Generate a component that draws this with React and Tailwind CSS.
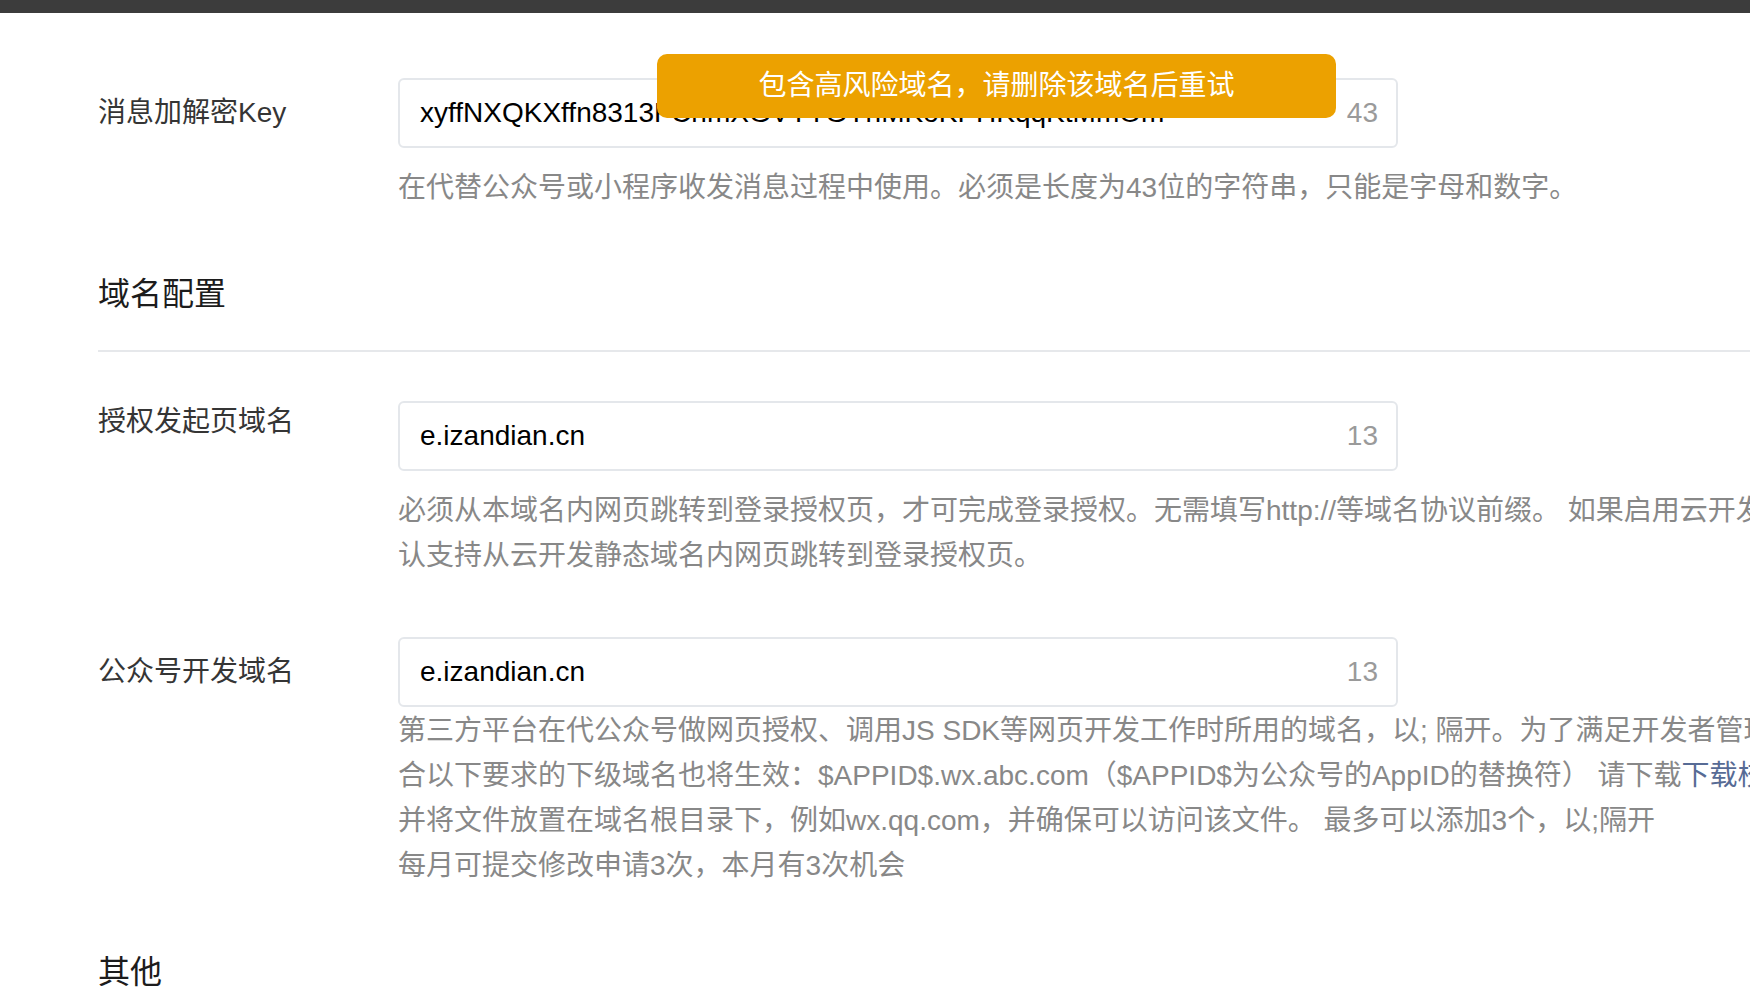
import React from 'react';

const FONT = { fontFamily: '"Liberation Sans", "Noto Sans CJK SC", sans-serif' };

const Field = ({ label, value, count, labelAlign = 'center' }) => (
  <div className="flex">
    <div
      className={
        labelAlign === 'center'
          ? 'w-[300px] h-[70px] flex items-center text-[28px] text-[#353535]'
          : 'w-[300px] leading-[42px] text-[28px] text-[#353535]'
      }
    >
      {label}
    </div>
    <div className="w-[1000px] h-[70px] border-2 border-[#e4e7eb] rounded-md flex items-center justify-between pl-[20px] pr-[18px] bg-white">
      <span className="text-[28px] text-black whitespace-nowrap">{value}</span>
      <span className="text-[28px] text-[#9a9a9a]">{count}</span>
    </div>
  </div>
);

const Help = ({ lines, className = '' }) => (
  <div className={`ml-[300px] text-[28px] leading-[45px] text-[#888888] whitespace-nowrap ${className}`}>
    {lines.map((line, i) => (
      <div key={i}>{line}</div>
    ))}
  </div>
);

export default function App() {
  return (
    <div className="relative w-[1750px] h-[992px] overflow-hidden bg-white" style={FONT}>
      {/* top bar */}
      <div className="h-[13px] bg-[#3c3c3c]" />

      <div className="pl-[98px]">
        <div className="pt-[65px]">
          <Field label="消息加解密Key" value="xyffNXQKXffn8313FChmXGVYTGYhMKoKPHKqqKtMmOm" count="43" />
        </div>
        <Help
          className="mt-[17px]"
          lines={['在代替公众号或小程序收发消息过程中使用。必须是长度为43位的字符串，只能是字母和数字。']}
        />

        {/* 域名配置 */}
        <div className="mt-[62px] text-[32px] leading-[44px] text-[#1c1c1c]">域名配置</div>
        <div className="mt-[34px] h-[2px] bg-[#e6e8eb]" />

        <div className="mt-[49px]">
          <Field label="授权发起页域名" value="e.izandian.cn" count="13" labelAlign="top" />
        </div>
        <Help
          className="mt-[17px]"
          lines={[
            '必须从本域名内网页跳转到登录授权页，才可完成登录授权。无需填写http://等域名协议前缀。 如果启用云开发静态网站托管，默',
            '认支持从云开发静态域名内网页跳转到登录授权页。',
          ]}
        />

        <div className="mt-[59px]">
          <Field label="公众号开发域名" value="e.izandian.cn" count="13" />
        </div>
        <Help
          className="mt-[1px]"
          lines={[
            '第三方平台在代公众号做网页授权、调用JS SDK等网页开发工作时所用的域名，以; 隔开。为了满足开发者管理需要，符',
            <>
              合以下要求的下级域名也将生效：$APPID$.wx.abc.com（$APPID$为公众号的AppID的替换符） 请下载
              <a href="#" className="text-[#576b95]">下载校验文件</a>
            </>,
            '并将文件放置在域名根目录下，例如wx.qq.com，并确保可以访问该文件。 最多可以添加3个，以;隔开',
            '每月可提交修改申请3次，本月有3次机会',
          ]}
        />

        {/* 其他 */}
        <div className="mt-[62px] text-[32px] leading-[44px] text-[#1c1c1c]">其他</div>
      </div>

      {/* toast */}
      <div className="absolute left-[657px] top-[54px] w-[679px] h-[64px] rounded-[10px] bg-[#eca100] flex items-center justify-center text-white text-[28px]">
        包含高风险域名，请删除该域名后重试
      </div>
    </div>
  );
}
